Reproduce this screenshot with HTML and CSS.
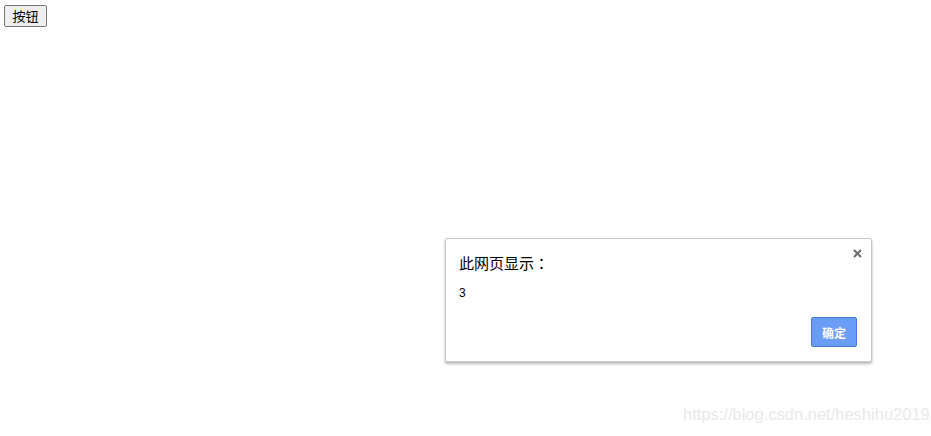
FILE: index.html
```html
<!DOCTYPE html>
<html>
<head>
<meta charset="utf-8">
<link rel="stylesheet" href="styles.css">
</head>
<body>
<button class="btn">按钮</button>
<div class="dialog">
  <svg class="close" width="9" height="9" viewBox="0 0 9 9"><path d="M1 1L8 8M8 1L1 8" stroke="#6b6b6b" stroke-width="2"/></svg>
  <div class="title">此网页显示：</div>
  <div class="msg">3</div>
  <div class="actions"><button class="ok">确定</button></div>
</div>
<div class="watermark">https://blog.csdn.net/heshihu2019</div>
</body>
</html>
```
FILE: styles.css
```css
html, body { margin: 0; padding: 0; background: #fff; }
body { width: 931px; height: 436px; overflow: hidden; position: relative; font-family: "Noto Sans CJK SC", "Liberation Sans", sans-serif; }
.btn {
  position: absolute; left: 4px; top: 5px;
  width: 43px; height: 22px; padding: 0;
  font-family: "Noto Sans CJK SC", sans-serif; font-size: 13px; line-height: 20px;
  color: #000; background: #efefef;
  border: 1px solid #767676; border-radius: 2px;
}
.dialog {
  position: absolute; left: 445px; top: 238px;
  width: 427px; height: 124px; box-sizing: border-box;
  background: #fff; border: 1px solid #c8c8c8; border-radius: 2px;
  box-shadow: 0 2px 3px rgba(0,0,0,0.28);
  padding: 14px 14px 0 13px;
}
.close { position: absolute; right: 9px; top: 10px; }
.title { font-family: "Noto Sans CJK JP", sans-serif; font-size: 15px; line-height: 20px; color: #000; }
.msg { margin-top: 13px; font-family: "Liberation Sans", sans-serif; font-size: 12px; line-height: 14px; color: #000; }
.actions { display: flex; justify-content: flex-end; margin-top: 17px; }
.ok {
  width: 46px; height: 30px; padding: 0;
  background: #6a9ef6; border: 1px solid #4a7de0; border-radius: 2px;
  color: #fff; font-weight: bold; font-size: 12px;
  font-family: "Noto Sans CJK SC", sans-serif;
}
.watermark {
  position: absolute; left: 683px; top: 405px;
  font-family: "Liberation Sans", sans-serif; font-size: 16.5px; color: #e9e9e9;
}
```
